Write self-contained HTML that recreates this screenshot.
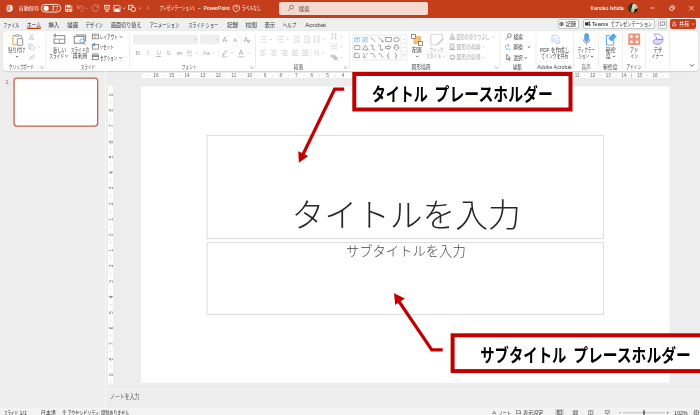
<!DOCTYPE html>
<html lang="ja"><head><meta charset="utf-8"><title>PowerPoint</title>
<style>
html,body{margin:0;padding:0;}
body{width:700px;height:415px;overflow:hidden;position:relative;background:#EDEDED;font-family:"Liberation Sans",sans-serif;}
div{position:absolute;box-sizing:border-box;}
#titlebar{left:0;top:0;width:700px;height:18px;background:#C43E1C;}
#search{left:278.800px;top:1.700px;width:149.400px;height:12.900px;border-radius:2px;background:#F5D9D0;}
#avatar{left:628px;top:3.400px;width:9.600px;height:9.600px;border-radius:50%;background:radial-gradient(circle at 62% 45%,#E9DDB0 0,#C9B57E 22%,#5a4a32 45%,#1d1a17 70%);}
#tabs{left:0;top:18px;width:700px;height:13px;background:#EFEFEF;}
.btn{top:19px;height:9.600px;border:.7px solid #c4c4c4;border-radius:2px;background:#fff;}
#share{left:670px;top:19px;width:26.200px;height:9.600px;border-radius:2px;background:#C43E1C;}
#ribbon{left:3px;top:30.600px;width:695px;height:40.600px;border-radius:3.500px;background:#FFF;box-shadow:0 .4px 1.200px rgba(0,0,0,.13);}
#hruler{left:141.500px;top:72.500px;width:527.800px;height:5.600px;background:#fff;}
#vruler{left:108.400px;top:85.500px;width:4.400px;height:298.500px;background:#fff;}
#panediv{left:105.300px;top:71px;width:1px;height:337px;background:#F8F8F8;}
#thumb{left:13.400px;top:77.500px;width:84.900px;height:49.200px;border:1.200px solid #C0634D;border-radius:3px;background:#fff;}
#slide{left:141.100px;top:86.900px;width:528.600px;height:296px;background:#fff;}
.ph{border:.7px solid #cfcfcf;}
#notesline{left:106px;top:388.800px;width:594px;height:1px;background:#F7F7F7;}
#status{left:0;top:408px;width:700px;height:7px;background:#F3F3F3;}
#viewsel{left:555.400px;top:1px;width:8.800px;height:6px;background:#D6D6D6;}
.callout{border:4px solid #C00000;background:#fff;}
svg{position:absolute;left:0;top:0;will-change:transform;}
</style></head><body>
<div id="titlebar"><div id="search"></div></div>
<div id="tabs"></div>
<div class="btn" style="left:557.500px;width:21.600px"></div>
<div class="btn" style="left:582.600px;width:72px"></div>
<div class="btn" style="left:658.300px;width:8.500px"></div>
<div id="share"></div>
<div id="ribbon"></div>
<div id="hruler"></div><div id="vruler"></div><div id="panediv"></div>
<div id="notesline"></div>
<div id="status"><div id="viewsel" style="top:1px"></div></div>
<svg width="700" height="415" viewBox="0 0 700 415" font-family="'Liberation Sans', 'Noto Sans CJK JP', sans-serif">
<rect x="14.050" y="78.150" width="83.600" height="47.900" rx="2.800" fill="#fff" stroke="#C0634D" stroke-width="1.300"/>
<rect x="141.100" y="86.600" width="528.400" height="296.300" fill="#fff"/>
<g fill="#fff" stroke="#C00000" stroke-width="4"><rect x="354.300" y="74" width="216.200" height="35.500"/><rect x="452.600" y="335.300" width="260" height="35.800"/></g>
<circle cx="9.3" cy="8.2" r="3.5" fill="#fff"/>
<path d="M5.6 6.1h3.9v4.3H5.6z" fill="#C43E1C" opacity=".85"/>
<path d="M6.9 6.9h1.1a.9.9 0 010 1.8H7.5v1H6.9zM7.5 7.4v.8h.4a.4.4 0 000-.8z" fill="#fff"/>
<path d="M9.4 4.8v3.4h3.3M9.4 8.2l2.4 2.5" stroke="#C43E1C" stroke-width=".45" fill="none" opacity=".8"/>
<text x="18.5" y="10.2" font-size="5" fill="#fff" text-anchor="start" textLength="20.7" lengthAdjust="spacingAndGlyphs">自動保存</text>
<rect x="41.3" y="4.4" width="19.5" height="7.7" rx="3.85" fill="none" stroke="#fff" stroke-width=".8"/>
<circle cx="46.100" cy="8.250" r="2.600" fill="#fff"/>
<text x="51.38" y="10.35" font-size="5.4" fill="#fff" text-anchor="start" textLength="7.33" lengthAdjust="spacingAndGlyphs">オフ</text>
<g fill="none" stroke="#fff" stroke-width=".8"><path d="M65.600 5.400h5l1.200 1.200v4.800h-6.200z"/><path d="M66.900 5.600h3.400v1.700h-3.400zM66.800 9h3.800v2.400h-3.800z" fill="#fff" stroke-width=".4"/><rect x="67.800" y="9.900" width="1.700" height="1.500" fill="#C43E1C" stroke="none"/></g>
<g fill="none" stroke="#fff" stroke-width=".9" opacity=".42"><path d="M77.600 5v3.200h3.200M77.900 7.900c1.500-2.200 4-2.500 5.200-1.100 1.300 1.500.3 3.600-2.700 4.900"/><path d="M86.200 7.800l1 1 1-1" stroke-width=".7"/><path d="M97.800 6a3.300 3.300 0 10.800 2.400M98.700 4.800v2.400h-2.400"/></g>
<g fill="none" stroke="#fff" stroke-width=".8"><path d="M104 5.500h6" stroke-width="1.200"/><path d="M104.800 5.400v3.900h4.400V5.400M107 9.300v2M105.300 11.400h3.400"/><path d="M106.300 6.700l1.600.8-1.600.8z" fill="#fff" stroke="none"/></g>
<g fill="none" stroke="#fff" stroke-width=".8"><path d="M114 5.400h5l1 1v5h-6z"/><path d="M115 8.800h4v2.600h-4z" fill="#fff" stroke-width=".4"/><path d="M123 7.700l1 1 1-1" stroke-width=".8"/></g>
<g fill="none" stroke="#fff" stroke-width=".85"><rect x="128.700" y="5.300" width="4.200" height="4.200"/><circle cx="133.300" cy="9.300" r="2.300" fill="#C43E1C"/><path d="M138.600 7.700l1 1 1-1" stroke-width=".8"/></g>
<g fill="none" stroke="#fff" stroke-width=".55" opacity=".7"><path d="M147 7h2.200M147.100 8.300l1 1 1-1"/></g>
<text x="159.33" y="10.31" font-size="5.3" fill="#fff" text-anchor="start" textLength="35.5" lengthAdjust="spacingAndGlyphs">プレゼンテーション1</text>
<rect x="198.3" y="8.1" width="2" height=".6" fill="#fff"/>
<g fill="none" stroke="#fff" stroke-width=".7"><path d="M236.3 5.1l3.1 1v2.6c0 1.6-1.5 2.6-3.1 3.2-1.600-.6-3.100-1.600-3.100-3.200V6.100z"/><path d="M235.300 7.300a1 1 0 112 0c0 .7-1 .7-1 1.500M236.300 9.600v.5" stroke-width=".6"/></g>
<text x="241.77" y="10.31" font-size="5.3" fill="#fff" text-anchor="start" textLength="18.9" lengthAdjust="spacingAndGlyphs">ラベルなし</text>
<g fill="none" stroke="#6b3a2e" stroke-width=".6"><circle cx="291.600" cy="7.100" r="1.900"/><path d="M290.300 8.500l-2.500 2.600"/></g>
<text x="298.84" y="10.6" font-size="5.8" fill="#5e3a30" text-anchor="start" textLength="10.68" lengthAdjust="spacingAndGlyphs">検索</text>
<clipPath id="av"><circle cx="633" cy="8.100" r="4.900"/></clipPath><g clip-path="url(#av)"><rect x="628" y="3" width="10" height="10.500" fill="#242b22"/><ellipse cx="636" cy="6" rx="2.200" ry="3" fill="#b9c4b4"/><ellipse cx="633.300" cy="8" rx="1.500" ry="4.600" fill="#E6D9A4" transform="rotate(8 633.300 8)"/><ellipse cx="631.900" cy="10.500" rx="1" ry="2.200" fill="#b9a468"/><ellipse cx="636" cy="11" rx="1.500" ry="1.800" fill="#15170f"/><ellipse cx="629.800" cy="7" rx="1.500" ry="3.500" fill="#2f3d33"/></g>
<g fill="none" stroke="#fff" stroke-width=".75"><path d="M650.6 8h4"/><rect x="669.900" y="7" width="3.300" height="3.300" rx=".8"/><path d="M671 6.900v-.2a.8.800 0 01.8-.8h1.800a.8.800 0 01.8.800v1.800a.8.800 0 01-.8.800h-.3"/><path d="M689.200 5.900l4.600 4.600M693.800 5.900l-4.600 4.600"/></g>
<text x="3.34" y="26.96" font-size="6.2" fill="#3a3a3a" text-anchor="start" textLength="16.02" lengthAdjust="spacingAndGlyphs">ファイル</text>
<text x="26.85" y="26.96" font-size="6.2" fill="#222" text-anchor="start" textLength="14.18" lengthAdjust="spacingAndGlyphs">ホーム</text>
<rect x="27" y="27.700" width="13.900" height="1.200" rx=".5" fill="#C43E1C"/>
<text x="48.27" y="26.96" font-size="6.2" fill="#3a3a3a" text-anchor="start" textLength="11.1" lengthAdjust="spacingAndGlyphs">挿入</text>
<text x="67.06" y="26.96" font-size="6.2" fill="#3a3a3a" text-anchor="start" textLength="11.25" lengthAdjust="spacingAndGlyphs">描画</text>
<text x="85.46" y="26.96" font-size="6.2" fill="#3a3a3a" text-anchor="start" textLength="17.44" lengthAdjust="spacingAndGlyphs">デザイン</text>
<text x="110.91" y="26.96" font-size="6.2" fill="#3a3a3a" text-anchor="start" textLength="30.47" lengthAdjust="spacingAndGlyphs">画面切り替え</text>
<text x="149.7" y="26.96" font-size="6.2" fill="#3a3a3a" text-anchor="start" textLength="29.6" lengthAdjust="spacingAndGlyphs">アニメーション</text>
<text x="188.14" y="26.96" font-size="6.2" fill="#3a3a3a" text-anchor="start" textLength="30.06" lengthAdjust="spacingAndGlyphs">スライド ショー</text>
<text x="227.21" y="26.96" font-size="6.2" fill="#3a3a3a" text-anchor="start" textLength="10.88" lengthAdjust="spacingAndGlyphs">記録</text>
<text x="245.55" y="26.96" font-size="6.2" fill="#3a3a3a" text-anchor="start" textLength="11.4" lengthAdjust="spacingAndGlyphs">校閲</text>
<text x="264.48" y="26.96" font-size="6.2" fill="#3a3a3a" text-anchor="start" textLength="10.72" lengthAdjust="spacingAndGlyphs">表示</text>
<text x="282.75" y="26.96" font-size="6.2" fill="#3a3a3a" text-anchor="start" textLength="13.64" lengthAdjust="spacingAndGlyphs">ヘルプ</text>
<g fill="none" stroke="#333" stroke-width=".6"><circle cx="561.6" cy="24" r="1.900"/><circle cx="561.600" cy="24" r=".8" fill="#333"/></g>
<text x="565.62" y="26.3" font-size="5.8" fill="#222" text-anchor="start" textLength="10.48" lengthAdjust="spacingAndGlyphs">記録</text>
<g fill="#333"><rect x="585" y="22.300" width="3.200" height="3.200" rx=".4"/><circle cx="589.200" cy="22.500" r=".9"/><path d="M588.400 23.600h2v1.600a1 1 0 01-2 0z" opacity=".8"/></g>
<text x="610.59" y="26.3" font-size="5.8" fill="#222" text-anchor="start" textLength="41.7" lengthAdjust="spacingAndGlyphs">でプレゼンテーション</text>
<g fill="none" stroke="#444" stroke-width=".6"><path d="M660.400 21.900h4.400v3.200h-2.600l-1 1v-1h-.8z"/></g>
<g fill="none" stroke="#fff" stroke-width=".6"><path d="M672.600 23.500v2.400h3.200v-2.400M674.200 24.700v-3M673.200 22.700l1-1 1 1"/><path d="M692.200 23.500l1 1 1-1" stroke-width=".7"/></g>
<text x="679.28" y="26.3" font-size="5.8" fill="#fff" text-anchor="start" textLength="9.88" lengthAdjust="spacingAndGlyphs">共有</text>
<rect x="45.7" y="33.5" width=".6" height="35" fill="#e1e1e1"/>
<rect x="129.1" y="33.5" width=".6" height="35" fill="#e1e1e1"/>
<rect x="255.0" y="33.5" width=".6" height="35" fill="#e1e1e1"/>
<rect x="349.2" y="33.5" width=".6" height="35" fill="#e1e1e1"/>
<rect x="499.59999999999997" y="33.5" width=".6" height="35" fill="#e1e1e1"/>
<rect x="535.7" y="33.5" width=".6" height="35" fill="#e1e1e1"/>
<rect x="573.0" y="33.5" width=".6" height="35" fill="#e1e1e1"/>
<rect x="598.1" y="33.5" width=".6" height="35" fill="#e1e1e1"/>
<rect x="622.1" y="33.5" width=".6" height="35" fill="#e1e1e1"/>
<rect x="645.2" y="33.5" width=".6" height="35" fill="#e1e1e1"/>
<rect x="669.1" y="33.5" width=".6" height="35" fill="#e1e1e1"/>
<text x="9.1" y="68.78" font-size="5.2" fill="#444" text-anchor="start" textLength="24.8" lengthAdjust="spacingAndGlyphs">クリップボード</text>
<path d="M41.300000000000004 65.9h-.4v2.300h2.300v-.4M43.2 67.10000000000001v.900h-.900M43.2 68.0l-1.400-1.400" fill="none" stroke="#9a9a9a" stroke-width=".4"/>
<text x="80.68" y="68.78" font-size="5.2" fill="#444" text-anchor="start" textLength="14.42" lengthAdjust="spacingAndGlyphs">スライド</text>
<text x="181.78" y="68.78" font-size="5.2" fill="#444" text-anchor="start" textLength="15.05" lengthAdjust="spacingAndGlyphs">フォント</text>
<path d="M251.1 65.9h-.4v2.300h2.300v-.4M253 67.10000000000001v.900h-.900M253 68.0l-1.400-1.400" fill="none" stroke="#9a9a9a" stroke-width=".4"/>
<text x="293.87" y="68.78" font-size="5.2" fill="#444" text-anchor="start" textLength="9.23" lengthAdjust="spacingAndGlyphs">段落</text>
<path d="M344.90000000000003 65.9h-.4v2.300h2.300v-.4M346.8 67.10000000000001v.900h-.900M346.8 68.0l-1.400-1.400" fill="none" stroke="#9a9a9a" stroke-width=".4"/>
<text x="411.41" y="68.78" font-size="5.2" fill="#444" text-anchor="start" textLength="19.15" lengthAdjust="spacingAndGlyphs">図形描画</text>
<path d="M495.6 65.9h-.4v2.300h2.300v-.4M497.5 67.10000000000001v.900h-.900M497.5 68.0l-1.400-1.400" fill="none" stroke="#9a9a9a" stroke-width=".4"/>
<text x="512.9" y="68.78" font-size="5.2" fill="#444" text-anchor="start" textLength="9.24" lengthAdjust="spacingAndGlyphs">編集</text>
<text x="581.24" y="68.78" font-size="5.2" fill="#444" text-anchor="start" textLength="9.68" lengthAdjust="spacingAndGlyphs">音声</text>
<text x="603.08" y="68.78" font-size="5.2" fill="#444" text-anchor="start" textLength="14.39" lengthAdjust="spacingAndGlyphs">秘密度</text>
<text x="626.25" y="68.78" font-size="5.2" fill="#444" text-anchor="start" textLength="15.21" lengthAdjust="spacingAndGlyphs">アドイン</text>
<g fill="none" stroke-width=".9"><path d="M15.200 35.500h-2.300v9.300h4" stroke="#E8943A"/><path d="M19.400 35.500h2.300v3" stroke="#E8943A"/><path d="M15.300 36.300v-1.300h1.200l.8-1 .8 1h1.200v1.300z" stroke="#777" stroke-width=".6" fill="#fff"/><rect x="17.300" y="38.700" width="5.400" height="6.600" rx=".6" stroke="#666" stroke-width=".7" fill="#fff"/></g>
<text x="8.27" y="52.49" font-size="5.5" fill="#3a3a3a" text-anchor="start" textLength="16.91" lengthAdjust="spacingAndGlyphs">貼り付け</text>
<path d="M15.85 56.025l1.15 1.15 1.15 -1.15" fill="none" stroke="#444" stroke-width="0.8"/>
<g fill="none" stroke="#b5b5b5" stroke-width=".6"><path d="M30.200 33.900l2.400 4.300M33 33.900l-2.400 4.300"/><circle cx="30.300" cy="38.900" r=".8"/><circle cx="32.900" cy="38.900" r=".8"/><path d="M28.800 44h2.600l1.200 1.200v3.400h-3.800z"/><path d="M30.600 45.500h2.600l1.200 1.200v3.200h-3.800z" fill="#fff"/><path d="M29.400 59.300l1.800-2.600 1.400 1zM31.600 56.600l1.700-1.700 1.300 1.200-1.800 1.500zM33.600 54.700l.9-.9" /></g>
<path d="M37.9 46.25l1.1 1.1 1.1 -1.1" fill="none" stroke="#b4b4b4" stroke-width="0.6"/>
<g fill="none" stroke="#666" stroke-width=".8"><path d="M57.500 35.600h7.300v7.700h-10.800v-5"/><path d="M54.200 39.200h10.500M59.400 39.200v4" stroke-width=".6"/><path d="M55.200 33.300v4.400M53 35.500h4.400" stroke="#3FA34D" stroke-width=".9"/></g>
<text x="53.09" y="52.19" font-size="5.5" fill="#3a3a3a" text-anchor="start" textLength="12.99" lengthAdjust="spacingAndGlyphs">新しい</text>
<text x="49.27" y="57.89" font-size="5.5" fill="#3a3a3a" text-anchor="start" textLength="14.95" lengthAdjust="spacingAndGlyphs">スライド</text>
<path d="M65.44999999999999 55.324999999999996l1.15 1.15 1.15 -1.15" fill="none" stroke="#444" stroke-width="0.8"/>
<g fill="none" stroke="#666" stroke-width=".8"><path d="M75.800 35h9.800v6.500"/><rect x="74.200" y="36.300" width="9.800" height="6.900" fill="#fff"/><circle cx="82" cy="41" r="2.100" stroke="#3A96DD" fill="#fff" stroke-width=".7"/><path d="M83.500 42.600l2.200 2.200" stroke="#3A96DD" stroke-width=".8"/></g>
<text x="70.67" y="52.19" font-size="5.5" fill="#3a3a3a" text-anchor="start" textLength="18.54" lengthAdjust="spacingAndGlyphs">スライドの</text>
<text x="72.82" y="57.89" font-size="5.5" fill="#3a3a3a" text-anchor="start" textLength="14.7" lengthAdjust="spacingAndGlyphs">再利用</text>
<g fill="none" stroke="#666" stroke-width=".7"><rect x="92.300" y="34.100" width="6.200" height="4.700"/><path d="M92.300 35.800h6.200M95 35.800v3" stroke-width=".5"/><rect x="92.300" y="44.600" width="6.200" height="4.500"/><path d="M92.200 45.300a2 2 0 012.800-1.500l-.3-1M95 43.800l-1 .5" stroke="#3A96DD" stroke-width=".7"/><path d="M92.600 44.900h2.600v1.400h-2.600z" fill="#3A96DD" stroke="none" opacity=".7"/><rect x="92.300" y="55.300" width="6.200" height="4.400"/><path d="M92 54h6.800" stroke="#3FA34D" stroke-width=".9"/><path d="M92.300 56.500h6.200" stroke-width=".8"/></g>
<text x="99.42" y="38.79" font-size="5.5" fill="#3a3a3a" text-anchor="start" textLength="18.62" lengthAdjust="spacingAndGlyphs">レイアウト</text>
<path d="M119.85 36.324999999999996l1.15 1.15 1.15 -1.15" fill="none" stroke="#444" stroke-width="0.8"/>
<text x="99.46" y="48.89" font-size="5.5" fill="#3a3a3a" text-anchor="start" textLength="14.25" lengthAdjust="spacingAndGlyphs">リセット</text>
<text x="100.01" y="59.69" font-size="5.5" fill="#3a3a3a" text-anchor="start" textLength="17.23" lengthAdjust="spacingAndGlyphs">セクション</text>
<path d="M119.44999999999999 57.224999999999994l1.15 1.15 1.15 -1.15" fill="none" stroke="#444" stroke-width="0.8"/>
<rect x="133" y="34.500" width="65.200" height="9.700" rx="2" fill="#efefef"/><rect x="200" y="34.500" width="19.900" height="9.700" rx="2" fill="#efefef"/>
<path d="M194.9 38.75l1.1 1.1 1.1 -1.1" fill="none" stroke="#b4b4b4" stroke-width="0.6"/>
<path d="M216.20000000000002 38.75l1.1 1.1 1.1 -1.1" fill="none" stroke="#b4b4b4" stroke-width="0.6"/>
<text x="224.8" y="41.6" font-size="6.8" fill="#a2a2a2" font-weight="normal" font-style="normal" text-anchor="middle" >A</text>
<path d="M227.300 36.200l.7-.7.700.7" fill="none" stroke="#a2a2a2" stroke-width=".45"/>
<text x="235.3" y="41.6" font-size="5.8" fill="#a2a2a2" font-weight="normal" font-style="normal" text-anchor="middle" >A</text>
<path d="M237.300 36l.7.7.7-.7" fill="none" stroke="#a2a2a2" stroke-width=".45"/>
<rect x="240.800" y="35.500" width=".5" height="8" fill="#ddd"/>
<text x="246" y="41.6" font-size="6.8" fill="#a2a2a2" font-weight="normal" font-style="normal" text-anchor="middle" >A</text>
<path d="M247.500 42.400l2-2.800.9.600-2 2.800z" fill="#a2a2a2"/>
<text x="137.7" y="55" font-size="6.2" fill="#b4b4b4" font-weight="bold" font-style="normal" text-anchor="middle" >B</text>
<text x="147.9" y="55" font-size="6.2" fill="#b4b4b4" font-weight="normal" font-style="italic" text-anchor="middle" font-family="Liberation Serif">I</text>
<text x="158.7" y="55" font-size="6.2" fill="#b4b4b4" font-weight="normal" font-style="normal" text-anchor="middle" text-decoration="underline">U</text>
<rect x="156.500" y="56" width="4.400" height=".45" fill="#a2a2a2"/>
<text x="168.5" y="55" font-size="6.2" fill="#b4b4b4" font-weight="normal" font-style="normal" text-anchor="middle" >S</text>
<text x="179.4" y="54.5" font-size="4.6" fill="#b4b4b4" font-weight="normal" font-style="normal" text-anchor="middle" >ab</text>
<rect x="176.500" y="52.800" width="5.800" height=".45" fill="#a2a2a2"/>
<text x="189.5" y="53.8" font-size="4.6" fill="#b4b4b4" font-weight="normal" font-style="normal" text-anchor="middle" >AV</text>
<path d="M187.200 55.800h4.600M187.200 55.800l.7-.6M187.200 55.800l.7.600M191.800 55.800l-.7-.6M191.800 55.800l-.7.600" stroke="#a2a2a2" stroke-width=".35" fill="none"/>
<path d="M195.6 52.45l1.1 1.1 1.1 -1.1" fill="none" stroke="#b4b4b4" stroke-width="0.6"/>
<text x="206.4" y="55" font-size="6" fill="#b4b4b4" font-weight="normal" font-style="normal" text-anchor="middle" >Aa</text>
<path d="M212.3 52.45l1.1 1.1 1.1 -1.1" fill="none" stroke="#b4b4b4" stroke-width="0.6"/>
<rect x="218.200" y="48.500" width=".5" height="8.500" fill="#ddd"/>
<path d="M222.800 54.200l3-4 1.200.9-3 4zM222.300 55.400l.5-1.200 1.200.900z" fill="none" stroke="#a2a2a2" stroke-width=".55"/><rect x="221.800" y="56.300" width="5.600" height="1" fill="#c8c8c8"/>
<path d="M230.9 52.45l1.1 1.1 1.1 -1.1" fill="none" stroke="#b4b4b4" stroke-width="0.6"/>
<text x="241" y="55" font-size="6.6" fill="#a2a2a2" font-weight="normal" font-style="normal" text-anchor="middle" >A</text>
<rect x="238.300" y="56.200" width="5.400" height="1.100" fill="#c8c8c8"/>
<path d="M247.70000000000002 52.45l1.1 1.1 1.1 -1.1" fill="none" stroke="#b4b4b4" stroke-width="0.6"/>
<path d="M262.20 36.60h4.40M262.20 39.35h4.40M262.20 42.10h4.40M260.2 36.60h1M260.2 39.35h1M260.2 42.10h1M279.00 36.60h4.40M279.00 39.35h4.40M279.00 42.10h4.40M277 36.60h.9M277 39.35h.9M277 42.10h.9M293.60 36.30h6.00M296.60 38.30h3.00M296.60 40.30h3.00M293.60 42.30h6.00M295.600 38.200l-1.500 1.100 1.500 1.100M304.00 36.30h6.00M307.00 38.30h3.00M307.00 40.30h3.00M304.00 42.30h6.00M304.300 38.200l1.500 1.100-1.500 1.100M316.60 36.30h3.60M316.60 38.30h3.60M316.60 40.30h3.60M316.60 42.30h3.60M314.600 36v6.600M313.800 37l.8-.9.800.9M313.800 41.600l.8.900.8-.9M260.40 50.20h6.00M260.40 51.95h4.00M260.40 53.70h6.00M260.40 55.45h4.00M270.90 50.20h6.00M271.90 51.95h4.00M270.90 53.70h6.00M271.90 55.45h4.00M281.40 50.20h6.00M283.40 51.95h4.00M281.40 53.70h6.00M283.40 55.45h4.00M291.80 50.20h6.00M291.80 51.95h6.00M291.80 53.70h6.00M291.80 55.45h6.00M302.20 50.20h6.00M302.20 51.95h6.00M302.20 53.70h6.00M302.20 55.45h6.00M302.200 49.200v1M308.200 49.200v1M302.200 55.400v1M308.200 55.400v1M314.20 51.00h2.00M314.20 52.90h2.00M314.20 54.80h2.00M317.20 51.00h2.00M317.20 52.90h2.00M317.20 54.80h2.00" fill="none" stroke="#bdbdbd" stroke-width=".55"/>
<path d="M269.79999999999995 38.85l1.1 1.1 1.1 -1.1" fill="none" stroke="#b4b4b4" stroke-width="0.6"/>
<path d="M286.4 38.85l1.1 1.1 1.1 -1.1" fill="none" stroke="#b4b4b4" stroke-width="0.6"/>
<path d="M323.29999999999995 38.85l1.1 1.1 1.1 -1.1" fill="none" stroke="#b4b4b4" stroke-width="0.6"/>
<path d="M322.09999999999997 52.25l1.1 1.1 1.1 -1.1" fill="none" stroke="#b4b4b4" stroke-width="0.6"/>
<path d="M340.29999999999995 36.050000000000004l1.1 1.1 1.1 -1.1" fill="none" stroke="#b4b4b4" stroke-width="0.6"/>
<path d="M340.29999999999995 46.150000000000006l1.1 1.1 1.1 -1.1" fill="none" stroke="#b4b4b4" stroke-width="0.6"/>
<path d="M340.29999999999995 56.95l1.1 1.1 1.1 -1.1" fill="none" stroke="#b4b4b4" stroke-width="0.6"/>
<rect x="310.800" y="48.500" width=".5" height="8.500" fill="#ddd"/>
<g fill="none" stroke="#b4b4b4" stroke-width=".55"><path d="M332.300 33.800v5.400M331.500 34.600l.8-.9.800.9M331.500 38.400l.8.900.8-.9M335.600 33.800v5.400M334.800 34.600l.8-.9.800.9M334.800 38.400l.8.900.8-.9M334 36.500h.1"/><rect x="331.200" y="44.200" width="5.800" height="4.600" stroke-dasharray="1 .6"/><path d="M332.500 46.500h3.200" /><path d="M330.800 55h3.600v2h-3.600zM333 56h3v2.400h-3zM334.500 57.500h3v2.400h-3z" fill="#ddd"/></g>
<rect x="352.700" y="35" width="54.100" height="25" rx="1.500" fill="#fff" stroke="#dcdcdc" stroke-width=".6"/>
<path d="M400.700 35.300v24.400M400.700 43.400h6M400.700 51.600h6" stroke="#dcdcdc" stroke-width=".5" fill="none"/>
<path d="M403 39.600l.8-.8.800.8M403 47.200l.8.800.8-.8M402.900 54.300h1.800M403 55.500l.8.800.8-.8" stroke="#888" stroke-width=".45" fill="none"/>
<g fill="none" stroke="#555" stroke-width=".55"><rect x="354.500" y="37.300" width="5" height="4.600" stroke="#3A96DD" fill="#f2f8fd" stroke-dasharray=".8 .4"/><path d="M355.800 38.500h2.400M357 38.500v2.500" stroke="#3A96DD"/><rect x="362.600" y="37.300" width="5" height="4.600" stroke="#3A96DD" fill="#f2f8fd" stroke-dasharray=".8 .4"/><path d="M363.800 38.500l2.400 1.200-2.400 1.200" stroke="#3A96DD"/><path d="M370.600 37.300l4.800 4.600"/><path d="M378.400 37.300l4.800 4.600M383.200 41.900l-.3-1.500M383.200 41.900l-1.500-.3"/><rect x="385.800" y="37.600" width="5.400" height="3.900"/><ellipse cx="396.400" cy="39.600" rx="2.800" ry="2"/><rect x="354.300" y="45.500" width="5.600" height="4" rx=".8"/><path d="M365.400 45.200l2.700 4.600h-5.400z"/><path d="M370.600 45.300h2.200v4.500h2.400"/><path d="M378.200 45.300h2.200v4.500h2.400M382.800 49.800l-.9-.7M382.800 49.800l-.9.700"/><path d="M385.600 46.600h2.800v-1.200l2.600 2.100-2.600 2.100v-1.200h-2.800z"/><path d="M394.800 45h3.200v2.800h1.200l-2.800 2.400-2.800-2.400h1.200z"/><path d="M354.600 53.200h3.200l1.600 2v2.400h-4.800z"/><path d="M363 53l1.600 2.600-1.400 1.400 2.800.600M366 54.600l1.800-1.400" /><path d="M370.400 53.600c2.600-.4 4.600 1.200 4.600 4"/><path d="M378.200 54.400c1.600-1.800 3 0 3.600 1.600.4 1 .8 1.400 1.600 1.400"/><path d="M389.400 53c-1 0-1.200.4-1.200 1.200v.8c0 .6-.3.800-.9.800.6 0 .9.200.9.800v.8c0 .8.200 1.200 1.200 1.200"/><path d="M394.800 53c1 0 1.200.4 1.200 1.200v.8c0 .6.300.8.900.8-.6 0-.9.200-.9.800v.8c0 .8-.2 1.200-1.200 1.200"/></g>
<g stroke-width=".7"><rect x="414" y="36.800" width="6.600" height="6.600" fill="#F8C36B" stroke="#E8A33A"/><rect x="411.600" y="34.400" width="4" height="4" fill="#fff" stroke="#666"/><rect x="418.600" y="41.400" width="4" height="4" fill="#fff" stroke="#666"/></g>
<text x="412.05" y="51.89" font-size="5.5" fill="#3a3a3a" text-anchor="start" textLength="9.75" lengthAdjust="spacingAndGlyphs">配置</text>
<path d="M416.15000000000003 55.824999999999996l1.15 1.15 1.15 -1.15" fill="none" stroke="#444" stroke-width="0.8"/>
<g fill="none" stroke="#c2c2c2" stroke-width=".7"><path d="M442.600 37.500v-3.200h-11.800v10.600h7"/><path d="M442.800 38.200l-4.400 4.600-1.600 2.200 2.400-1.400 4.400-4.600z" fill="#d8d8d8"/></g>
<text x="429.66" y="52.19" font-size="5.5" fill="#a6a6a6" text-anchor="start" textLength="13.79" lengthAdjust="spacingAndGlyphs">クイック</text>
<text x="426.02" y="58.39" font-size="5.5" fill="#a6a6a6" text-anchor="start" textLength="15.16" lengthAdjust="spacingAndGlyphs">スタイル</text>
<path d="M442.79999999999995 55.85l1.1 1.1 1.1 -1.1" fill="none" stroke="#b4b4b4" stroke-width="0.6"/>
<g fill="none" stroke="#9c9c9c" stroke-width=".65"><path d="M450.300 37.300l2-3 2 3zM452.300 34.300v-1"/><path d="M449.400 39h5.800" stroke-width="1"/><path d="M450 44.200h3.200M450 44.200v4h4v-2.600M451.600 46.800l3.600-3.800"/><path d="M449.400 49.500h5.800" stroke-width=".8"/><ellipse cx="452.400" cy="56.800" rx="2.600" ry="1.900"/><path d="M450 58.600c1.200 1.400 3.800 1.400 5 0M451.400 56.400a1.400 1 0 012.400 0" /></g>
<text x="456.58" y="38.89" font-size="5.5" fill="#a6a6a6" text-anchor="start" textLength="33.1" lengthAdjust="spacingAndGlyphs">図形の塗りつぶし</text>
<path d="M491.9 36.45l1.1 1.1 1.1 -1.1" fill="none" stroke="#b4b4b4" stroke-width="0.6"/>
<text x="456.56" y="48.99" font-size="5.5" fill="#a6a6a6" text-anchor="start" textLength="24.16" lengthAdjust="spacingAndGlyphs">図形の枠線</text>
<path d="M482.5 46.45l1.1 1.1 1.1 -1.1" fill="none" stroke="#b4b4b4" stroke-width="0.6"/>
<text x="456.56" y="59.49" font-size="5.5" fill="#a6a6a6" text-anchor="start" textLength="24.22" lengthAdjust="spacingAndGlyphs">図形の効果</text>
<path d="M482.5 57.050000000000004l1.1 1.1 1.1 -1.1" fill="none" stroke="#b4b4b4" stroke-width="0.6"/>
<g fill="none" stroke="#555" stroke-width=".65"><circle cx="509.400" cy="35.600" r="1.900"/><path d="M508 37.100l-2.300 2.500"/></g>
<text x="513.47" y="38.59" font-size="5.5" fill="#3a3a3a" text-anchor="start" textLength="9.48" lengthAdjust="spacingAndGlyphs">検索</text>
<g fill="none" stroke-width=".7"><path d="M507.600 43.800c1.800.6 1.800 2.600 0 3.200z" fill="#C76BD0" stroke="none"/><path d="M505.400 46.400c0 1.800 1.200 3 3 3M509.800 48.400v1.600" stroke="#3A96DD"/><path d="M506 44.600l-.4 1.200" stroke="#3A96DD"/></g>
<text x="513.29" y="48.99" font-size="5.5" fill="#3a3a3a" text-anchor="start" textLength="9.56" lengthAdjust="spacingAndGlyphs">置換</text>
<path d="M527.85 46.425l1.15 1.15 1.15 -1.15" fill="none" stroke="#444" stroke-width="0.8"/>
<path d="M506.600 54.400v5.400l1.400-1.200 1 2 .8-.4-1-2h1.800z" fill="none" stroke="#444" stroke-width=".6"/>
<text x="513.46" y="59.79" font-size="5.5" fill="#3a3a3a" text-anchor="start" textLength="9.32" lengthAdjust="spacingAndGlyphs">選択</text>
<path d="M524.5500000000001 57.224999999999994l1.15 1.15 1.15 -1.15" fill="none" stroke="#444" stroke-width="0.8"/>
<g fill="none" stroke="#9DB7F5" stroke-width=".7"><path d="M552 42.600v-7.400h4.400l2.400 2.400v2"/><path d="M554 37.600c.6 1.600 1.600 2.600 3 3.200-1.400 0-2.600.4-3.800 1 .6-1.200.8-2.600.8-4.200z" stroke-width=".5"/><path d="M555.400 42c1 2 3.400 2 4.200.6.600-1-.2-2.200-1.400-2.200" stroke="#7FA2F2"/></g>
<text x="540.11" y="52.19" font-size="5.5" fill="#3a3a3a" text-anchor="start" textLength="29.27" lengthAdjust="spacingAndGlyphs">PDF を作成し</text>
<text x="541.22" y="58.39" font-size="5.5" fill="#3a3a3a" text-anchor="start" textLength="27.03" lengthAdjust="spacingAndGlyphs">てリンクを共有</text>
<g fill="none" stroke-width=".8"><rect x="584.800" y="33.600" width="3.600" height="7.600" rx="1.800" fill="#5BA7E6" stroke="#3A8AD0"/><path d="M583.300 39.400a3.300 3.300 0 006.600 0M586.600 42.800v2.200" stroke="#777" stroke-width=".7"/></g>
<text x="577.73" y="52.19" font-size="5.5" fill="#3a3a3a" text-anchor="start" textLength="17.1" lengthAdjust="spacingAndGlyphs">ディクテー</text>
<text x="578.67" y="58.39" font-size="5.5" fill="#3a3a3a" text-anchor="start" textLength="10.37" lengthAdjust="spacingAndGlyphs">ション</text>
<path d="M590.85 55.824999999999996l1.15 1.15 1.15 -1.15" fill="none" stroke="#444" stroke-width="0.8"/>
<g fill="none" stroke="#3A96DD" stroke-width=".8"><path d="M610 35.600h-3.600v9.400h7.400v-5"/><path d="M612.800 34l-4 4.400 2.800 2.800 4.200-4.200z" fill="#3A96DD" opacity=".85"/><path d="M613.200 33.600l3.200 3.200" stroke-width="1"/></g>
<text x="605.87" y="52.19" font-size="5.5" fill="#3a3a3a" text-anchor="start" textLength="9.9" lengthAdjust="spacingAndGlyphs">秘密</text>
<text x="605.86" y="58.39" font-size="5.5" fill="#3a3a3a" text-anchor="start" textLength="5.23" lengthAdjust="spacingAndGlyphs">度</text>
<path d="M612.65 55.824999999999996l1.15 1.15 1.15 -1.15" fill="none" stroke="#444" stroke-width="0.8"/>
<rect x="628.200" y="33.500" width="12" height="11.500" rx=".8" fill="#E9967F"/><circle cx="631.4" cy="36.6" r="1.400" fill="#fff"/><circle cx="631.4" cy="41.9" r="1.400" fill="#fff"/><circle cx="637" cy="36.6" r="1.400" fill="#fff"/><circle cx="637" cy="41.9" r="1.400" fill="#fff"/>
<text x="630.11" y="52.19" font-size="5.5" fill="#3a3a3a" text-anchor="start" textLength="8.26" lengthAdjust="spacingAndGlyphs">アド</text>
<text x="630.3" y="58.39" font-size="5.5" fill="#3a3a3a" text-anchor="start" textLength="7.88" lengthAdjust="spacingAndGlyphs">イン</text>
<g fill="none" stroke="#7B83EB" stroke-width=".8"><path d="M654 34.200c5.600-1.200 9 1.600 9 5.200h-6.400c0-2-1-4-2.600-5.200z"/><path d="M663 39.400c0 3-2.400 5-5.400 5-2.600 0-4.600-1-4.600-2.600 0-1.400 1.600-2.400 3.600-2.400z" fill="#DDD6F7"/></g>
<text x="653.46" y="52.19" font-size="5.5" fill="#3a3a3a" text-anchor="start" textLength="8.7" lengthAdjust="spacingAndGlyphs">デザ</text>
<text x="651.71" y="58.39" font-size="5.5" fill="#3a3a3a" text-anchor="start" textLength="11.57" lengthAdjust="spacingAndGlyphs">イナー</text>
<path d="M689.800 64.300l2 2 2-2" fill="none" stroke="#444" stroke-width=".85"/>
<text x="203.4" y="10.1" font-size="5.2" fill="#fff" text-anchor="start" font-weight="normal" textLength="26.4" lengthAdjust="spacingAndGlyphs" stroke="#fff" stroke-width=".04">PowerPoint</text>
<text x="590.6" y="10.1" font-size="5.25" fill="#fff" text-anchor="start" font-weight="normal" textLength="33.1" lengthAdjust="spacingAndGlyphs" stroke="#fff" stroke-width=".04">Kanoko Ishida</text>
<text x="305.2" y="26.5" font-size="6.05" fill="#3a3a3a" text-anchor="start" font-weight="normal" textLength="20.8" lengthAdjust="spacingAndGlyphs" >Acrobat</text>
<text x="591.7" y="26" font-size="5.65" fill="#111" text-anchor="start" font-weight="normal" textLength="16.6" lengthAdjust="spacingAndGlyphs" >Teams</text>
<text x="537.2" y="68.6" font-size="5.28" fill="#444" text-anchor="start" font-weight="normal" textLength="34.6" lengthAdjust="spacingAndGlyphs" >Adobe Acrobat</text>
<text x="5.2" y="83.6" font-size="6.2" fill="#D0573A" text-anchor="start" font-weight="normal" >1</text>
<text x="155.9" y="77" font-size="4.6" fill="#666" text-anchor="middle" font-weight="normal" >16</text>
<text x="171.5" y="77" font-size="4.6" fill="#666" text-anchor="middle" font-weight="normal" >15</text>
<text x="187.1" y="77" font-size="4.6" fill="#666" text-anchor="middle" font-weight="normal" >14</text>
<text x="202.7" y="77" font-size="4.6" fill="#666" text-anchor="middle" font-weight="normal" >13</text>
<text x="218.3" y="77" font-size="4.6" fill="#666" text-anchor="middle" font-weight="normal" >12</text>
<text x="233.9" y="77" font-size="4.6" fill="#666" text-anchor="middle" font-weight="normal" >11</text>
<text x="249.5" y="77" font-size="4.6" fill="#666" text-anchor="middle" font-weight="normal" >10</text>
<text x="265.1" y="77" font-size="4.6" fill="#666" text-anchor="middle" font-weight="normal" >9</text>
<text x="280.7" y="77" font-size="4.6" fill="#666" text-anchor="middle" font-weight="normal" >8</text>
<text x="296.3" y="77" font-size="4.6" fill="#666" text-anchor="middle" font-weight="normal" >7</text>
<text x="311.9" y="77" font-size="4.6" fill="#666" text-anchor="middle" font-weight="normal" >6</text>
<text x="327.5" y="77" font-size="4.6" fill="#666" text-anchor="middle" font-weight="normal" >5</text>
<text x="343.1" y="77" font-size="4.6" fill="#666" text-anchor="middle" font-weight="normal" >4</text>
<text x="577.1" y="77" font-size="4.6" fill="#666" text-anchor="middle" font-weight="normal" >11</text>
<text x="592.7" y="77" font-size="4.6" fill="#666" text-anchor="middle" font-weight="normal" >12</text>
<text x="608.3" y="77" font-size="4.6" fill="#666" text-anchor="middle" font-weight="normal" >13</text>
<text x="623.9" y="77" font-size="4.6" fill="#666" text-anchor="middle" font-weight="normal" >14</text>
<text x="639.5" y="77" font-size="4.6" fill="#666" text-anchor="middle" font-weight="normal" >15</text>
<text x="655.1" y="77" font-size="4.6" fill="#666" text-anchor="middle" font-weight="normal" >16</text>
<path d="M148.1 75.100v.6M163.7 75.100v.6M179.3 75.100v.6M194.9 75.100v.6M210.5 75.100v.6M226.1 75.100v.6M241.7 75.100v.6M257.3 75.100v.6M272.9 75.100v.6M288.5 75.100v.6M304.1 75.100v.6M319.7 75.100v.6M335.3 75.100v.6M584.9 75.100v.6M600.5 75.100v.6M616.1 75.100v.6M631.7 75.100v.6M647.3 75.100v.6M662.9 75.100v.6" stroke="#888" stroke-width=".6" fill="none"/>
<rect x="631.300" y="72.500" width=".5" height="5.500" fill="#E8836A"/>
<text transform="translate(112.600 94.7) rotate(-90)" font-size="4.600" fill="#555" text-anchor="middle">9</text>
<text transform="translate(112.600 110.3) rotate(-90)" font-size="4.600" fill="#555" text-anchor="middle">8</text>
<text transform="translate(112.600 125.8) rotate(-90)" font-size="4.600" fill="#555" text-anchor="middle">7</text>
<text transform="translate(112.600 141.4) rotate(-90)" font-size="4.600" fill="#555" text-anchor="middle">6</text>
<text transform="translate(112.600 156.9) rotate(-90)" font-size="4.600" fill="#555" text-anchor="middle">5</text>
<text transform="translate(112.600 172.5) rotate(-90)" font-size="4.600" fill="#555" text-anchor="middle">4</text>
<text transform="translate(112.600 188.0) rotate(-90)" font-size="4.600" fill="#555" text-anchor="middle">3</text>
<text transform="translate(112.600 203.6) rotate(-90)" font-size="4.600" fill="#555" text-anchor="middle">2</text>
<text transform="translate(112.600 219.1) rotate(-90)" font-size="4.600" fill="#555" text-anchor="middle">1</text>
<text transform="translate(112.600 234.7) rotate(-90)" font-size="4.600" fill="#555" text-anchor="middle">0</text>
<text transform="translate(112.600 250.2) rotate(-90)" font-size="4.600" fill="#555" text-anchor="middle">1</text>
<text transform="translate(112.600 265.8) rotate(-90)" font-size="4.600" fill="#555" text-anchor="middle">2</text>
<text transform="translate(112.600 281.4) rotate(-90)" font-size="4.600" fill="#555" text-anchor="middle">3</text>
<text transform="translate(112.600 296.9) rotate(-90)" font-size="4.600" fill="#555" text-anchor="middle">4</text>
<text transform="translate(112.600 312.4) rotate(-90)" font-size="4.600" fill="#555" text-anchor="middle">5</text>
<text transform="translate(112.600 328.0) rotate(-90)" font-size="4.600" fill="#555" text-anchor="middle">6</text>
<text transform="translate(112.600 343.6) rotate(-90)" font-size="4.600" fill="#555" text-anchor="middle">7</text>
<text transform="translate(112.600 359.1) rotate(-90)" font-size="4.600" fill="#555" text-anchor="middle">8</text>
<text transform="translate(112.600 374.6) rotate(-90)" font-size="4.600" fill="#555" text-anchor="middle">9</text>
<path d="M110.200 102.5h.9M110.200 118.1h.9M110.200 133.6h.9M110.200 149.2h.9M110.200 164.7h.9M110.200 180.3h.9M110.200 195.8h.9M110.200 211.4h.9M110.200 226.9h.9M110.200 242.5h.9M110.200 258.0h.9M110.200 273.6h.9M110.200 289.1h.9M110.200 304.7h.9M110.200 320.2h.9M110.200 335.8h.9M110.200 351.3h.9M110.200 366.9h.9M110.200 382.4h.9" stroke="#777" stroke-width=".5" fill="none"/>
<rect x="108.300" y="142.800" width="4.800" height=".5" fill="#E8836A" opacity=".8"/>
<g fill="none" stroke="#d8d8d8" stroke-width=".9"><rect x="207.100" y="135.300" width="396.300" height="103.300"/><rect x="207.100" y="242.600" width="396.300" height="71.800"/></g>
<text x="291.53" y="227.35" font-size="32.5" font-weight="300" fill="#262626" text-anchor="start" textLength="229.2" lengthAdjust="spacingAndGlyphs">タイトルを入力</text>
<text x="345.91" y="255.82" font-size="13.2" font-weight="300" fill="#484848" text-anchor="start" textLength="119.8" lengthAdjust="spacingAndGlyphs">サブタイトルを入力</text>
<text x="109.96" y="398.61" font-size="6.6" fill="#555" text-anchor="start" textLength="29.56" lengthAdjust="spacingAndGlyphs">ノートを入力</text>
<text x="371.78" y="100.57" font-size="18.6" font-weight="bold" fill="#000" text-anchor="start" textLength="56.1" lengthAdjust="spacingAndGlyphs">タイトル</text>
<text x="434.57" y="100.57" font-size="18.6" font-weight="bold" fill="#000" text-anchor="start" textLength="118.26" lengthAdjust="spacingAndGlyphs">プレースホルダー</text>
<text x="480.21" y="362.07" font-size="18.6" font-weight="bold" fill="#000" text-anchor="start" textLength="86.17" lengthAdjust="spacingAndGlyphs">サブタイトル</text>
<text x="573.17" y="362.07" font-size="18.6" font-weight="bold" fill="#000" text-anchor="start" textLength="117.66" lengthAdjust="spacingAndGlyphs">プレースホルダー</text>
<g fill="none" stroke="#C00000" stroke-width="3.200"><path d="M344.200 89.200h-9.600L302 156.500"/><path d="M442.700 349.900h-10.900L399 301.500"/></g>
<path d="M298.900 162.700L298.300 151.200 308.300 156.100z" fill="#C00000"/>
<path d="M394 293.300L404.900 298.600 395.200 305.100z" fill="#C00000"/>
<text x="4.09" y="415.03" font-size="5.6" fill="#333" text-anchor="start" textLength="13.8" lengthAdjust="spacingAndGlyphs">スライド</text>
<text x="19.5" y="414.8" font-size="5.3" fill="#333" text-anchor="start" font-weight="normal" textLength="7.5" lengthAdjust="spacingAndGlyphs" >1/1</text>
<text x="40.77" y="415.03" font-size="5.6" fill="#333" text-anchor="start" textLength="14.99" lengthAdjust="spacingAndGlyphs">日本語</text>
<g fill="none" stroke="#444" stroke-width=".5"><circle cx="64.300" cy="410.800" r=".7"/><path d="M62.300 412.200h4M64.300 412.200v1.800M63.300 415.500l1-1.500 1 1.500"/></g>
<text x="67.55" y="415.03" font-size="5.6" fill="#333" text-anchor="start" textLength="61.64" lengthAdjust="spacingAndGlyphs">アクセシビリティ: 問題ありません</text>
<g fill="none" stroke="#444" stroke-width=".5"><path d="M492.400 413.600h3.600M492.900 413.600l1.300-2.600 1.300 2.600"/></g>
<text x="499.02" y="415.03" font-size="5.6" fill="#333" text-anchor="start" textLength="11.54" lengthAdjust="spacingAndGlyphs">ノート</text>
<g fill="none" stroke="#444" stroke-width=".5"><rect x="516.600" y="410.800" width="3.800" height="3"/><path d="M519.400 412.600l1.600 1.600" /></g>
<text x="523.29" y="415.03" font-size="5.6" fill="#333" text-anchor="start" textLength="19.91" lengthAdjust="spacingAndGlyphs">表示設定</text>
<g fill="none" stroke="#444" stroke-width=".5"><rect x="557.400" y="410.600" width="4.400" height="3.800"/><path d="M559 410.600v3.800M557.400 412h1.600"/><path d="M573.200 410.600h1.700v1.500h-1.700zM575.800 410.600h1.700v1.500h-1.700zM573.200 413h1.700v1.500h-1.700zM575.800 413h1.700v1.500h-1.700z"/><path d="M588.600 410.600h4.200v4h-4.200zM590.700 410.600v4" /><path d="M605 410.600h4.800M605.600 410.700v2.600h3.600v-2.600M607.400 413.300v1.500"/><path d="M619 412.700h1.800M666.600 412.700h2M667.600 411.700v2"/><path d="M623 412.700h42" stroke="#777" stroke-width=".4"/></g>
<rect x="643.400" y="410.200" width="1.200" height="5" fill="#333"/>
<text x="674.3" y="414.8" font-size="5.2" fill="#333" text-anchor="start" font-weight="normal" textLength="13.2" lengthAdjust="spacingAndGlyphs" >102%</text>
<g fill="none" stroke="#444" stroke-width=".5"><rect x="694.400" y="410.800" width="4" height="3.800"/><path d="M696.400 409.600v6M693.400 412.700h6" stroke-width=".35"/></g>
</svg>
</body></html>
